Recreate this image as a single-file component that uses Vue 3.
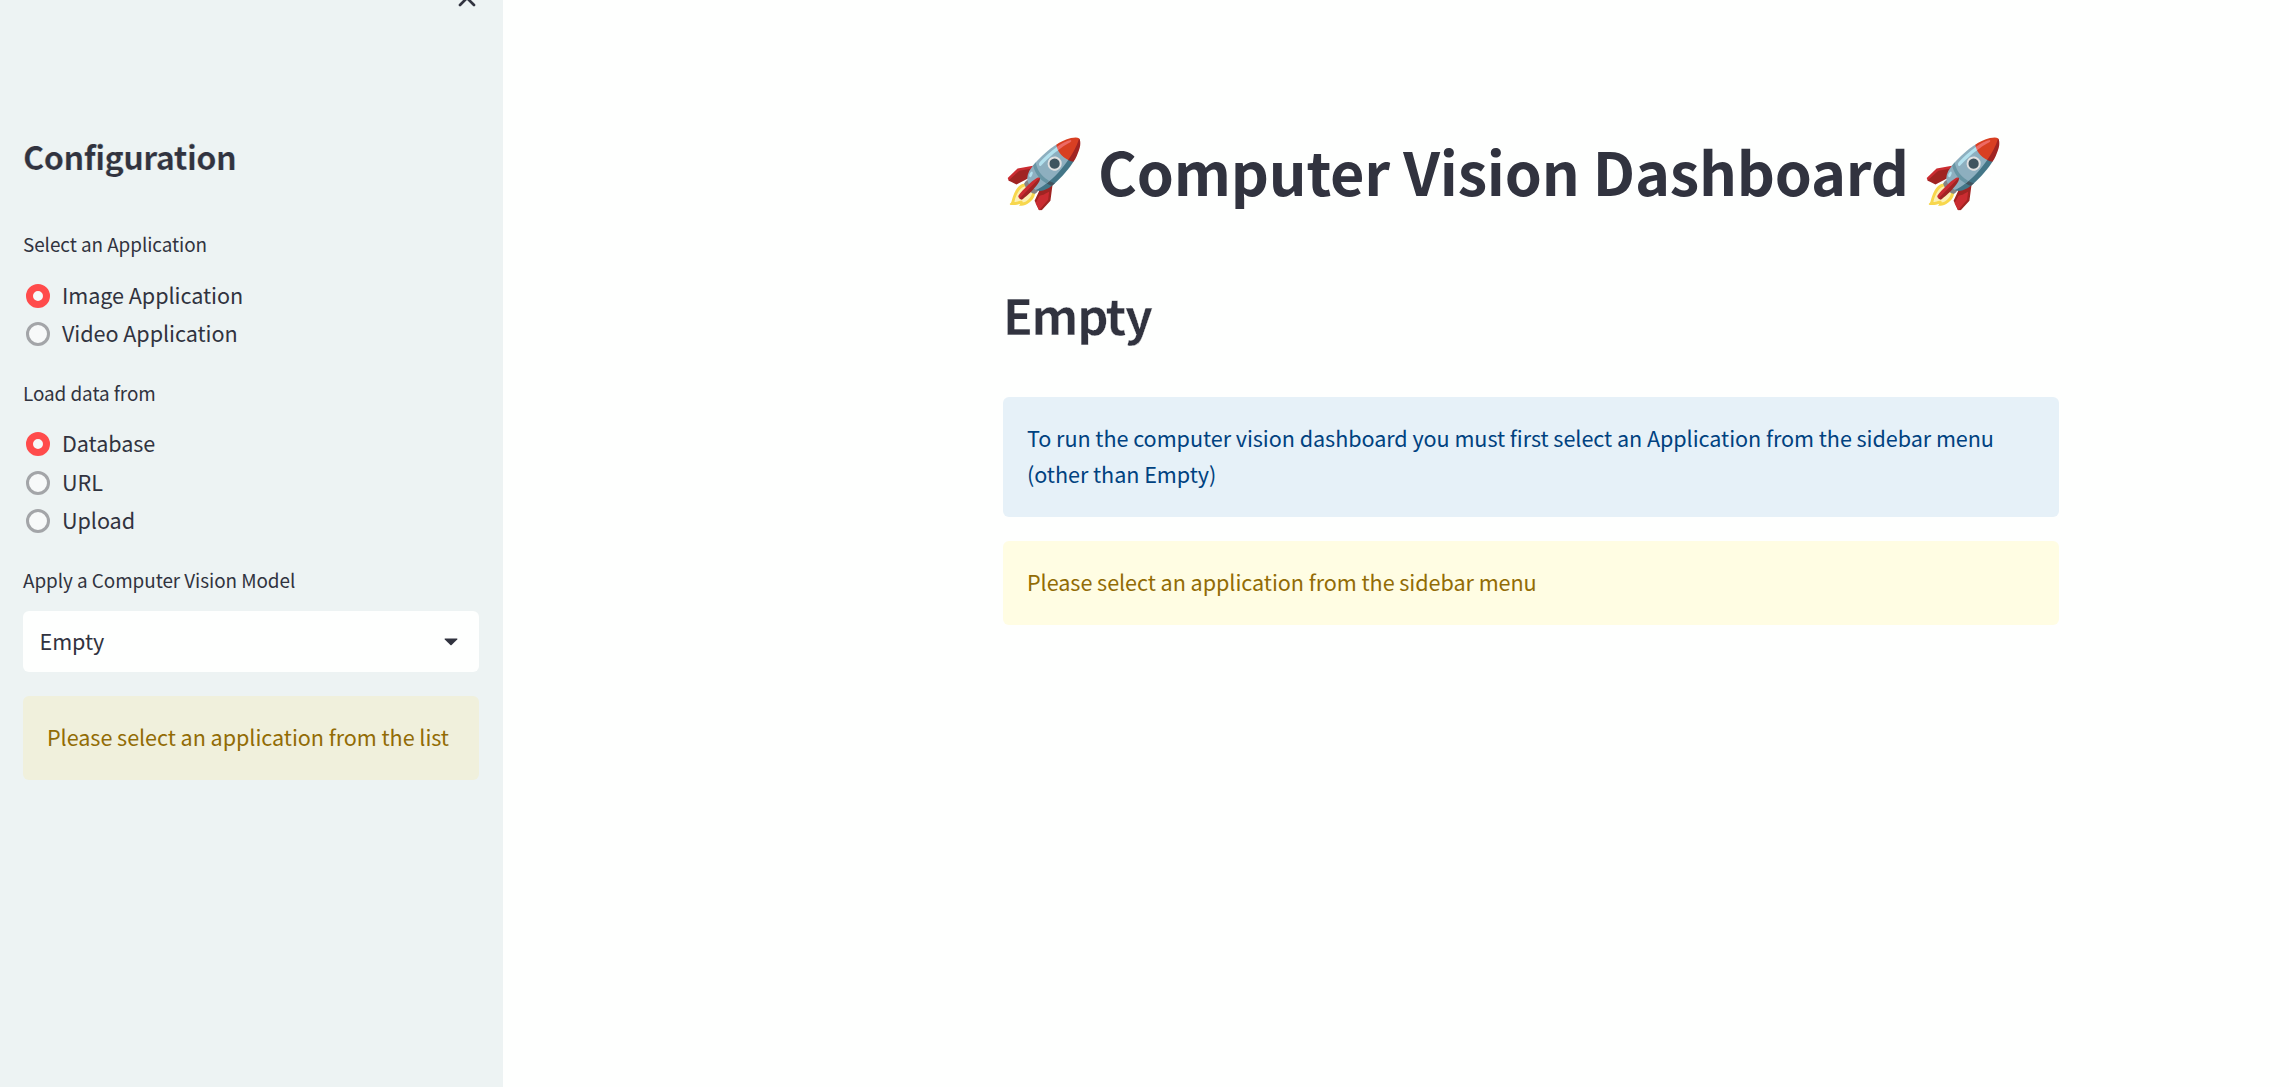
<script setup>
import { ref } from 'vue'

const groups = ref([
  { label: 'Select an Application', options: ['Image Application', 'Video Application'], selected: 0 },
  { label: 'Load data from', options: ['Database', 'URL', 'Upload'], selected: 0 },
])
</script>

<template>
  <div class="app">
    <aside class="sidebar">
      <header class="sidebar-top">
        <svg class="close" width="18" height="18" viewBox="0 0 18 18" aria-label="Close">
          <path d="M2 2 L16 16 M16 2 L2 16" />
        </svg>
      </header>
      <h2 class="sidebar-title">Configuration</h2>
      <section v-for="(group, g) in groups" :key="group.label" class="group">
        <p class="label">{{ group.label }}</p>
        <div class="options">
          <div v-for="(option, i) in group.options" :key="option" class="option" @click="groups[g].selected = i">
            <span class="radio" :class="{ checked: group.selected === i }"></span>
            <span class="option-text">{{ option }}</span>
          </div>
        </div>
      </section>
      <p class="label">Apply a Computer Vision Model</p>
      <div class="select">
        <span class="select-value">Empty</span>
        <svg class="caret" width="14" height="8" viewBox="0 0 14 8">
          <path d="M1 0.5 H13 Q13.8 0.7 13.2 1.4 L7.6 7 Q7 7.5 6.4 7 L0.8 1.4 Q0.2 0.7 1 0.5 Z" />
        </svg>
      </div>
      <div class="alert warning">Please select an application from the list</div>
    </aside>
    <main class="main">
      <h1 class="title"><span class="emoji">🚀</span> Computer Vision Dashboard <span class="emoji">🚀</span></h1>
      <h2 class="subtitle">Empty</h2>
      <div class="alert info">To run the computer vision dashboard you must first select an Application from the sidebar menu (other than Empty)</div>
      <div class="alert warning">Please select an application from the sidebar menu</div>
    </main>
  </div>
</template>

<style>
body {
  background: #fefffe;
}
</style>

<style scoped>
.app {
  display: flex;
  width: 100%;
  height: 1087px;
  overflow: hidden;
  background: #fefffe;
  color: #31333f;
  font-family: "Noto Sans CJK SC", "Source Sans Pro", sans-serif;
  font-size: 21.6px;
  letter-spacing: -0.057px;
}
h1,
h2,
p {
  margin: 0;
}
.sidebar {
  box-sizing: border-box;
  flex: none;
  width: 503px;
  padding: 0 24px 0 23px;
  background: #edf3f3;
}
.sidebar-top {
  display: flex;
  justify-content: flex-end;
  height: 134px;
  padding-right: 3px;
}
.close {
  margin-top: -11px;
  fill: none;
  stroke: #31333f;
  stroke-width: 2.7;
  stroke-linecap: round;
}
.sidebar-title {
  height: 95px;
  font-size: 32.4px;
  line-height: 44px;
  letter-spacing: -0.55px;
  -webkit-text-stroke: 0.2px #edf3f3;
}
.label {
  height: 30px;
  font-size: 18.9px;
  line-height: 30px;
}
.options {
  padding: 17.6px 0 24.6px;
}
.group + .group .options {
  padding: 17.1px 0 24.7px;
}
.option {
  display: flex;
  align-items: center;
  gap: 12px;
  height: 38.4px;
  padding-left: 3px;
}
.radio {
  box-sizing: border-box;
  flex: none;
  width: 24px;
  height: 24px;
  border: 3px solid #a3a5a8;
  border-radius: 50%;
  background: #f7f9f9;
}
.radio.checked {
  border: 7px solid #ff4b4b;
}
.option-text {
  line-height: 36px;
  padding-bottom: 2px;
}
.select {
  display: flex;
  align-items: center;
  justify-content: space-between;
  box-sizing: border-box;
  height: 61px;
  margin: 16px 0 24px;
  padding: 0 21px 0 16.5px;
  border-radius: 6px;
  background: #fefffe;
}
.select-value {
  line-height: 36px;
  padding-bottom: 0.6px;
}
.caret {
  margin-top: 1px;
  fill: #31333f;
}
.main {
  width: 1056px;
  margin-left: 500px;
}
.title {
  height: 160px;
  padding-top: 120px;
  font-size: 59.4px;
  line-height: 100px;
  letter-spacing: -0.22px;
  white-space: nowrap;
}
.emoji {
  font-size: 66px;
  line-height: 60px;
}
.subtitle {
  height: 117px;
  font-size: 48.6px;
  line-height: 68px;
  letter-spacing: -1.3px;
  -webkit-text-stroke: 0.3px #fefffe;
}
.alert {
  padding: 23px 24px 25px;
  border-radius: 6px;
  line-height: 36px;
}
.warning {
  color: #926c05;
}
.main .warning {
  margin-top: 24px;
  background: #fffde3;
}
.sidebar .warning {
  background: #f0f0dc;
}
.info {
  background: #e6f1f8;
  color: #004280;
}
</style>
